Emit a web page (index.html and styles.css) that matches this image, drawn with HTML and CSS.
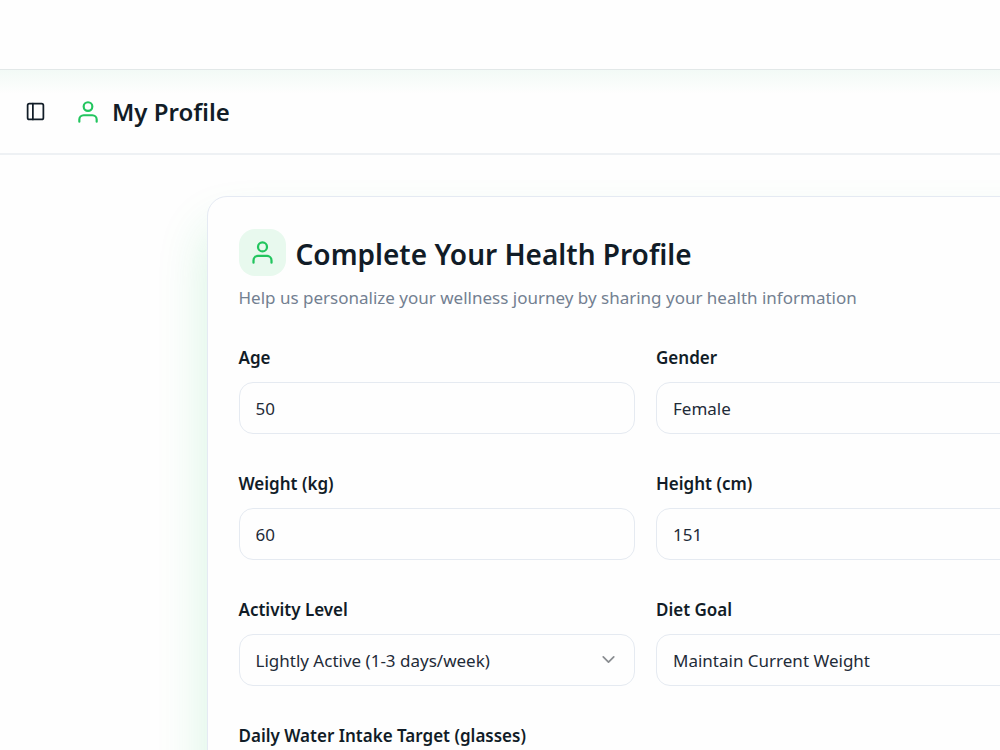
FILE: index.html
```html
<!DOCTYPE html>
<html lang="en">
<head>
    <meta charset="UTF-8">
    <meta name="viewport" content="width=device-width, initial-scale=1.0">
    <title>My Profile</title>
    <link rel="stylesheet" href="styles.css">
</head>
<body>
    <div class="page">
        <div class="topbar"></div>
        <header class="header">
            <button type="button" class="sidebar-toggle" aria-label="Toggle sidebar">
                <svg width="21" height="21" viewBox="0 0 24 24">
                    <rect x="3" y="3" width="18" height="18" rx="2"/>
                    <path d="M9 3v18"/>
                </svg>
            </button>
            <svg class="user-icon" width="26" height="26" viewBox="0 0 24 24">
                <circle cx="12" cy="7" r="4"/>
                <path d="M20 21v-2a4 4 0 0 0-4-4H8a4 4 0 0 0-4 4v2"/>
            </svg>
            <h1>My Profile</h1>
        </header>

        <main>
            <section class="card">
                <div class="card-title">
                    <div class="card-icon">
                        <svg class="user-icon" width="27" height="27" viewBox="0 0 24 24">
                            <circle cx="12" cy="7" r="4"/>
                            <path d="M20 21v-2a4 4 0 0 0-4-4H8a4 4 0 0 0-4 4v2"/>
                        </svg>
                    </div>
                    <h2>Complete Your Health Profile</h2>
                </div>
                <p class="subtitle">Help us personalize your wellness journey by sharing your health information</p>

                <form class="fields">
                    <div class="field">
                        <label for="age">Age</label>
                        <input type="text" id="age" name="age" inputmode="numeric" value="50">
                    </div>
                    <div class="field">
                        <label for="gender">Gender</label>
                        <div class="select">
                            <select id="gender" name="gender">
                                <option>Female</option>
                                <option>Male</option>
                            </select>
                            <svg width="21" height="21" viewBox="0 0 24 24"><path d="m6 9 6 6 6-6"/></svg>
                        </div>
                    </div>
                    <div class="field">
                        <label for="weight">Weight (kg)</label>
                        <input type="text" id="weight" name="weight" inputmode="numeric" value="60">
                    </div>
                    <div class="field">
                        <label for="height">Height (cm)</label>
                        <input type="text" id="height" name="height" inputmode="numeric" value="151">
                    </div>
                    <div class="field">
                        <label for="activity">Activity Level</label>
                        <div class="select">
                            <select id="activity" name="activity">
                                <option>Lightly Active (1-3 days/week)</option>
                            </select>
                            <svg width="21" height="21" viewBox="0 0 24 24"><path d="m6 9 6 6 6-6"/></svg>
                        </div>
                    </div>
                    <div class="field">
                        <label for="goal">Diet Goal</label>
                        <div class="select">
                            <select id="goal" name="goal">
                                <option>Maintain Current Weight</option>
                            </select>
                            <svg width="21" height="21" viewBox="0 0 24 24"><path d="m6 9 6 6 6-6"/></svg>
                        </div>
                    </div>
                    <div class="field wide">
                        <label for="water">Daily Water Intake Target (glasses)</label>
                        <input type="text" id="water" name="water" inputmode="numeric">
                    </div>
                </form>
            </section>
        </main>
    </div>
</body>
</html>
```
FILE: styles.css
```css
* {
    box-sizing: border-box;
}
body {
    margin: 0;
    font-family: "Segoe UI", "Noto Sans", sans-serif;
    font-size: 17px;
    line-height: 24px;
    color: #111c27;
    background-color: #fefefe;
    overflow-x: hidden;
}
h1, h2, p {
    margin: 0;
}
h1, h2, label {
    font-weight: 600;
}
svg {
    display: block;
    fill: none;
    stroke: currentColor;
    stroke-width: 2;
    stroke-linecap: round;
    stroke-linejoin: round;
}
.page {
    min-width: 1291px;
}
.topbar {
    height: 70px;
    border-bottom: 1px solid #e2e8e8;
}
.header {
    height: 85px;
    padding: 0 25px;
    display: flex;
    align-items: center;
    background: linear-gradient(#f2faf6, #fefefe 24px);
    border-bottom: 2px solid #eef1f4;
}
.sidebar-toggle {
    margin-right: 29px;
    padding: 0;
    color: inherit;
    background: none;
    border: none;
    cursor: pointer;
}
.header .user-icon {
    margin-right: 11px;
}
.user-icon {
    color: #22c55e;
}
h1 {
    font-size: 24px;
    line-height: 32px;
}
main {
    padding: 41px 32px;
}
.card {
    max-width: 878px;
    margin: 0 auto;
    padding: 32px 31px;
    background-color: #fefefe;
    border: 1px solid #e5eaf3;
    border-radius: 20px;
    box-shadow: 0 32px 50px rgba(34, 197, 94, 0.18);
}
.card-title {
    display: flex;
    align-items: center;
    gap: 10px;
}
.card-icon {
    padding: 10px;
    border-radius: 16px;
    background-color: #e8f9ee;
}
h2 {
    padding-top: 2px;
    font-size: 28px;
    line-height: 40px;
}
.subtitle {
    margin-top: 10px;
    color: #738091;
}
.fields {
    margin-top: 36px;
    display: grid;
    grid-template-columns: 1fr 1fr;
    gap: 38px 21px;
}
.field label {
    display: block;
    margin-bottom: 12px;
}
.wide {
    grid-column: 1 / -1;
}
input, select {
    display: block;
    width: 100%;
    height: 52px;
    padding: 0 16px;
    font: inherit;
    color: #1f2b38;
    background-color: #fefefe;
    border: 1px solid #e5eaf1;
    border-radius: 14px;
    appearance: none;
}
select {
    padding-top: 2px;
}
.select {
    position: relative;
}
.select svg {
    position: absolute;
    right: 16px;
    top: 15px;
    color: #8a8d91;
    pointer-events: none;
}
```
